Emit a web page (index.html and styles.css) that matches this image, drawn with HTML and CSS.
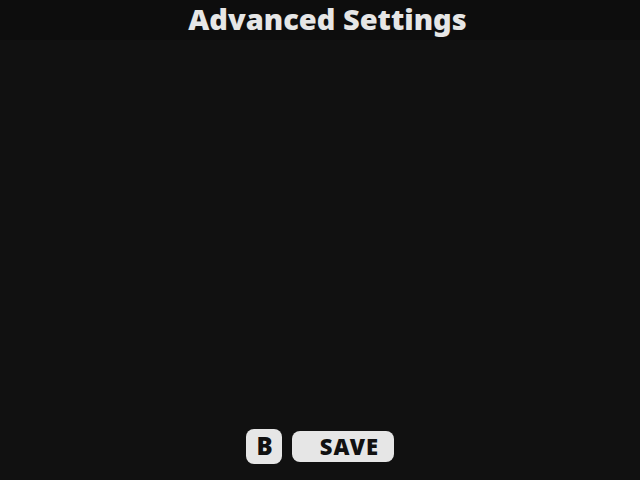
FILE: index.html
```html
<!DOCTYPE html>
<html>
<head>
<meta charset="utf-8">
<link rel="stylesheet" href="styles.css">
</head>
<body>
<div class="screen">
  <header class="header">Advanced Settings</header>
  <main class="content"></main>
  <footer class="footer">
    <span class="key">B</span>
    <span class="action">SAVE</span>
  </footer>
</div>
</body>
</html>
```
FILE: styles.css
```css
html, body {
  margin: 0;
  padding: 0;
  background: #111111;
}
.screen {
  width: 640px;
  height: 480px;
  display: flex;
  flex-direction: column;
  font-family: "Noto Sans", sans-serif;
  font-weight: 900;
  color: #e6e6e6;
}
.header {
  height: 40px;
  background: #0d0d0d;
  display: flex;
  align-items: center;
  justify-content: center;
  font-size: 29px;
  line-height: 40px;
  padding-left: 15px;
  padding-bottom: 2px;
  box-sizing: border-box;
}
.content {
  flex: 1;
}
.footer {
  display: flex;
  justify-content: center;
  align-items: center;
  gap: 10px;
  padding-bottom: 16px;
}
.key {
  width: 36px;
  height: 35px;
  border-radius: 8px;
  background: #e6e6e6;
  color: #111111;
  display: flex;
  align-items: center;
  justify-content: center;
  font-size: 24px;
  padding-bottom: 3px;
  padding-left: 1px;
  box-sizing: border-box;
}
.action {
  width: 102px;
  height: 31px;
  border-radius: 8px;
  background: #e6e6e6;
  color: #111111;
  display: flex;
  align-items: center;
  justify-content: flex-end;
  padding-right: 15px;
  padding-bottom: 1px;
  box-sizing: border-box;
  font-size: 22px;
  letter-spacing: 1px;
}
```
